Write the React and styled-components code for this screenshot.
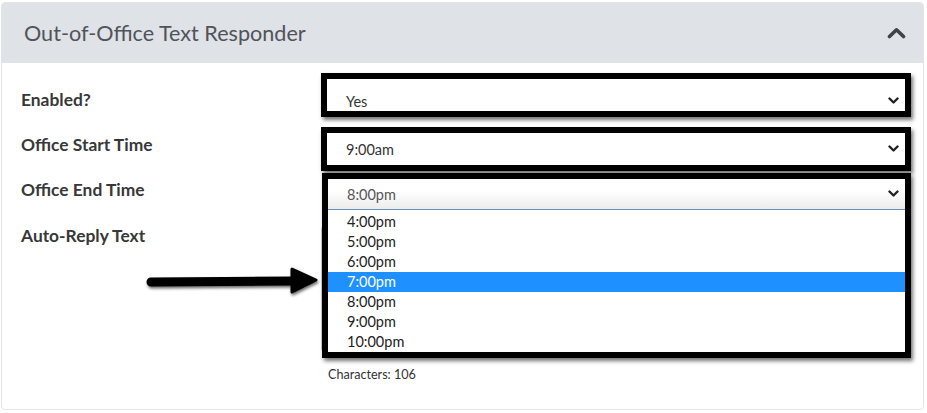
import styled, { createGlobalStyle } from 'styled-components'

const GlobalStyle = createGlobalStyle`
  html, body {
    margin: 0;
    padding: 0;
    background: #ffffff;
  }
  body {
    font-family: Lato, "Open Sans", sans-serif;
    color: #333;
  }
`

const endTimes = ['4:00pm', '5:00pm', '6:00pm', '7:00pm', '8:00pm', '9:00pm', '10:00pm']

function ChevronDown() {
    return (
        <svg width="11" height="8" viewBox="0 0 11 8">
            <polyline points="1.5,1.5 5.5,5.5 9.5,1.5" fill="none" stroke="#222" strokeWidth="2.4" strokeLinecap="round" strokeLinejoin="round" />
        </svg>
    )
}

function ChevronUp() {
    return (
        <svg width="19" height="12" viewBox="0 0 19 12">
            <polyline points="2.5,9.5 9.5,2.8 16.5,9.5" fill="none" stroke="#3f4347" strokeWidth="3.6" strokeLinecap="round" strokeLinejoin="round" />
        </svg>
    )
}

function Arrow() {
    return (
        <ArrowSvg width="180" height="40" viewBox="0 0 180 40">
            <defs>
                <filter id="arrowShadow" x="-10%" y="-50%" width="120%" height="200%">
                    <feGaussianBlur in="SourceAlpha" stdDeviation="1.6" />
                    <feOffset dx="1" dy="2" result="b" />
                    <feComponentTransfer><feFuncA type="linear" slope="0.6" /></feComponentTransfer>
                    <feMerge><feMergeNode /><feMergeNode in="SourceGraphic" /></feMerge>
                </filter>
            </defs>
            <g filter="url(#arrowShadow)">
                <line x1="6" y1="20" x2="150" y2="19" stroke="#000" strokeWidth="9" strokeLinecap="round" />
                <polygon points="147,7 171,18 147,30" fill="#000" stroke="#000" strokeWidth="3" strokeLinejoin="round" />
            </g>
        </ArrowSvg>
    )
}

export default function App() {
    return (
        <>
            <GlobalStyle />
            <Card>
                <Header>
                    <Title>Out-of-Office Text Responder</Title>
                    <ChevronUp />
                </Header>
                <Body>
                    <Row $height={54}>
                        <Label $top={17}>Enabled?</Label>
                        <Frame>
                            <Select $textTop={12}>
                                <span>Yes</span>
                                <ChevronDown />
                            </Select>
                        </Frame>
                    </Row>
                    <Row $height={46}>
                        <Label $top={8}>Office Start Time</Label>
                        <Frame>
                            <Select>
                                <span>9:00am</span>
                                <ChevronDown />
                            </Select>
                        </Frame>
                    </Row>
                    <Row $height={46}>
                        <Label $top={7}>Office End Time</Label>
                        <Anchor>
                            <OpenFrame>
                                <Select $focused>
                                    <span>8:00pm</span>
                                    <ChevronDown />
                                </Select>
                                <Options>
                                    {endTimes.map((t) =>
                                        <Option key={t} $active={t === '7:00pm'}>{t}</Option>
                                    )}
                                </Options>
                            </OpenFrame>
                        </Anchor>
                    </Row>
                    <Row>
                        <Label $top={7}>Auto-Reply Text</Label>
                        <div>
                            <TextArea />
                            <Counter>Characters: 106</Counter>
                        </div>
                    </Row>
                    <Arrow />
                </Body>
            </Card>
        </>
    )
}

const Card = styled.div`
margin: 2px 3px 0 1px;
height: 408px;
box-sizing: border-box;
border: 1px solid #e2e4e7;
border-radius: 4px;
overflow: hidden;
background: #fff;
`
const Header = styled.div`
height: 60px;
background: #dfe2e6;
display: flex;
align-items: center;
justify-content: space-between;
padding: 0 17px 0 22px;
`
const Title = styled.h2`
margin: 0;
font-family: Lato, sans-serif;
font-weight: 400;
font-size: 21.6px;
color: #50545a;
`
const Body = styled.div`
position: relative;
padding: 10px 12px 0 19px;
`
const Row = styled.div`
display: grid;
grid-template-columns: 300px 1fr;
height: ${(p) => (p.$height ? p.$height + 'px' : 'auto')};
`
const Label = styled.div`
padding-top: ${(p) => p.$top}px;
font-family: Lato, sans-serif;
font-weight: 700;
font-size: 17.4px;
line-height: 20px;
color: #383838;
`
const Frame = styled.div`
height: 32px;
border: 6px solid #000;
box-shadow: 2px 3px 4px rgba(0, 0, 0, 0.55);
background: #fff;
`
const Anchor = styled.div`
position: relative;
`
const OpenFrame = styled.div`
position: absolute;
top: 0;
left: 1px;
right: 0;
z-index: 2;
border: 6px solid #000;
box-shadow: 2px 3px 4px rgba(0, 0, 0, 0.55);
background: #fff;
`
const Select = styled.div`
height: ${(p) => (p.$focused ? '31px' : '32px')};
box-sizing: border-box;
display: flex;
align-items: center;
justify-content: space-between;
padding: ${(p) => p.$textTop || 0}px 6px 0 19px;
font-family: Lato, sans-serif;
font-size: 14.5px;
color: ${(p) => (p.$focused ? '#555' : '#333')};
background: ${(p) => (p.$focused ? 'linear-gradient(#fff 40%, #ececec)' : '#fff')};
border-bottom: ${(p) => (p.$focused ? '1px solid #6d8fb5' : 'none')};
`
const Options = styled.ul`
list-style: none;
margin: 0;
padding: 2px 0 0 0;
`
const Option = styled.li`
height: 20px;
line-height: 20px;
padding-left: 19px;
font-family: Lato, sans-serif;
font-size: 14.5px;
color: ${(p) => (p.$active ? '#fff' : '#222')};
background: ${(p) => (p.$active ? '#1e90ff' : 'transparent')};
`
const TextArea = styled.div`
margin-top: 7px;
height: 124px;
border: 1px solid #ccc;
border-radius: 3px;
`
const Counter = styled.div`
margin-top: 16px;
padding-left: 7px;
font-family: Lato, sans-serif;
font-size: 12.6px;
line-height: 14px;
color: #333;
`
const ArrowSvg = styled.svg`
position: absolute;
left: 143px;
top: 199px;
`
